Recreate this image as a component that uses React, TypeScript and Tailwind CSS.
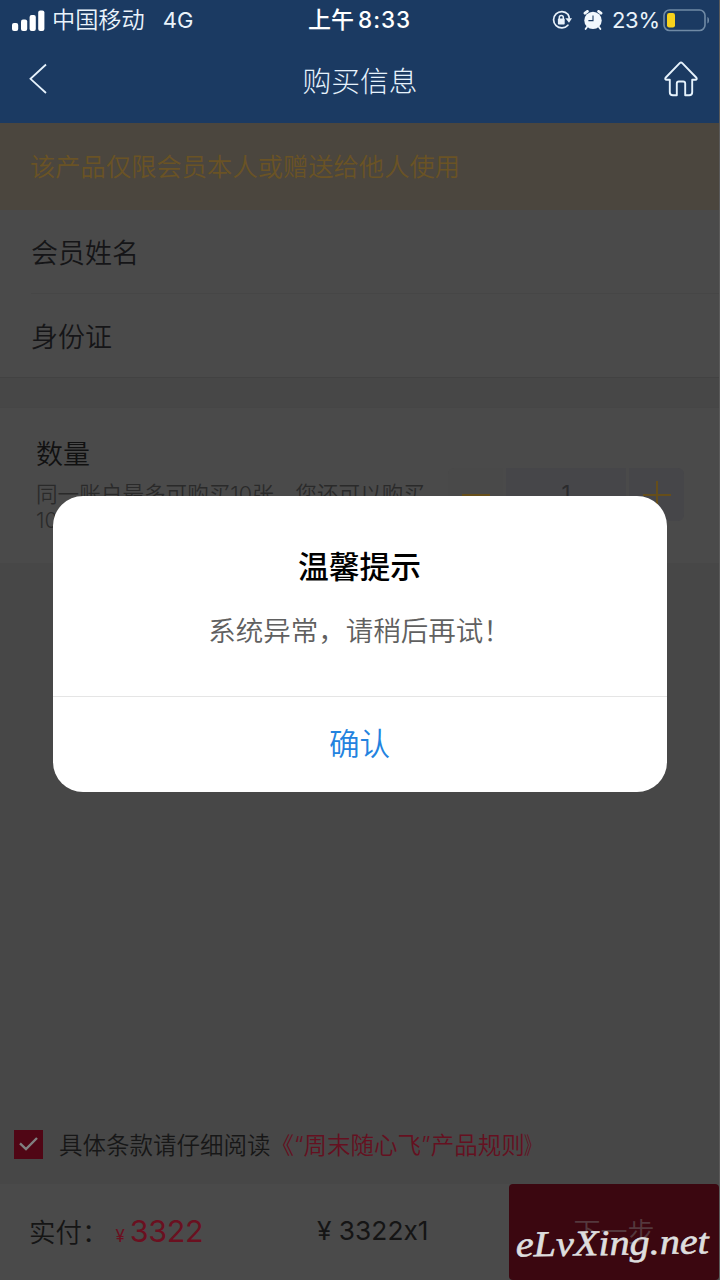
import type { ReactNode } from "react";

const FONT = "font-['Inter','Noto_Sans_CJK_SC',sans-serif] font-[350] [font-feature-settings:'calt'_0]";

function SignalIcon() {
  return (
    <svg width="33" height="21" viewBox="0 0 33 21" fill="#fff">
      <rect x="0" y="13" width="6.2" height="8" rx="2" />
      <rect x="9" y="9.5" width="6.2" height="11.5" rx="2" />
      <rect x="17.6" y="5" width="6.2" height="16" rx="2" />
      <rect x="26.2" y="0.5" width="6.2" height="20.5" rx="2" />
    </svg>
  );
}

function RotationLockIcon() {
  return (
    <svg width="20" height="20" viewBox="0 0 20 20" fill="none" stroke="#e8f1fa" strokeWidth="1.7">
      <path d="M15.9 4.3A8.2 8.2 0 1 0 15.9 15.2" strokeLinecap="round" />
      <path d="M13.4 8.2h6.6l-3 4.5z" fill="#e8f1fa" stroke="none" />
      <path d="M15.9 4.3a8 8 0 0 1 1.4 4.5" />
      <rect x="5.9" y="8.6" width="6.8" height="6" rx="0.8" fill="#e8f1fa" stroke="none" />
      <path d="M7.3 9V7.4a2 2 0 0 1 4 0V9" strokeWidth="1.5" />
    </svg>
  );
}

function AlarmIcon() {
  return (
    <svg width="20" height="20" viewBox="0 0 20 20" fill="none">
      <circle cx="10" cy="10.4" r="8.7" fill="#f2f8fd" />
      <path d="M2 3.2 4.4 1.4M18 3.2 15.6 1.4" stroke="#f2f8fd" strokeWidth="2.8" strokeLinecap="round" />
      <path d="M4 17 2.6 19M16 17l1.4 2" stroke="#f2f8fd" strokeWidth="1.8" strokeLinecap="round" />
      <path d="M10 5.4v5.2H5.4" stroke="#1b3a62" strokeWidth="1.1" />
    </svg>
  );
}

function BatteryIcon() {
  return (
    <svg width="47" height="23" viewBox="0 0 47 23" fill="none">
      <rect x="1" y="1" width="41" height="20.5" rx="5.5" stroke="#708aa5" strokeWidth="1.6" />
      <rect x="4" y="4" width="8" height="14.5" rx="2.2" fill="#f8d21c" />
      <path d="M44.4 8v6.6c1.3-.6 1.6-1.8 1.6-3.3s-.3-2.7-1.6-3.3z" fill="#708aa5" />
    </svg>
  );
}

function StatusBar() {
  return (
    <div className="flex h-10 items-center text-[22px] text-[#eaf3fb]">
      <div className="flex w-[308px] items-center pl-3">
        <SignalIcon />
        <span className="ml-[7px] text-[23.2px] leading-10">中国移动</span>
        <span className="ml-[18px] font-normal leading-10">4G</span>
      </div>
      <div className="flex w-[244px] items-center font-medium text-white">
        <span className="text-[23px] leading-10">上午</span>
        <span className="ml-1 text-[22.5px] leading-10 tracking-[1px]">8:33</span>
      </div>
      <RotationLockIcon />
      <div className="ml-[11px]">
        <AlarmIcon />
      </div>
      <span className="ml-[9px] w-[51px] whitespace-nowrap font-normal leading-10 tracking-[-0.3px]">23%</span>
      <BatteryIcon />
    </div>
  );
}

function NavBar() {
  return (
    <div className="flex h-[83px] items-start justify-between pl-[29px] pr-[21px] text-[#e6f2fc]">
      <svg className="mt-[23px]" width="18" height="32" viewBox="0 0 18 32" fill="none" stroke="currentColor" strokeWidth="1.8">
        <path d="M17 1.5 1.5 15.8 17 30" />
      </svg>
      <h1 className="ml-[9px] text-[28.8px] font-light leading-[84px]">购买信息</h1>
      <svg className="mt-[21px]" width="34" height="36" viewBox="0 0 34 36" fill="none" stroke="currentColor" strokeWidth="1.9" strokeLinejoin="round">
        <path d="M15.7 2.2 1.8 16.5c-1 1.1-.5 2.3.8 2.3h3.2v12.4c0 2 1 3 3 3h4V22.5c0-1.3.7-2 2-2h4.4c1.3 0 2 .7 2 2v11.7h4c2 0 3-1 3-3V18.8h3.2c1.3 0 1.8-1.2.8-2.3L18.3 2.2c-.8-.8-1.8-.8-2.6 0z" />
      </svg>
    </div>
  );
}

function FormRow({ children }: { children: ReactNode }) {
  return <div className="h-[83px] text-[27px] leading-[87px] text-[#151517]">{children}</div>;
}

function QuantitySection() {
  return (
    <section className="flex h-[156px] border-t border-[#464646] bg-[#4a4a4a] pl-9 pr-[34px]">
      <div className="w-[412px] pt-[27px]">
        <div className="text-[27px] leading-10 text-[#111]">数量</div>
        <div className="w-[400px] pt-[6px] text-[21.6px] leading-[26px] text-[#2a2a2a]">
          同一账户最多可购买10张，您还可以购买
          <br />
          10张
        </div>
      </div>
      <div className="mt-[60px] flex h-[53px] gap-[3px]">
        <div className="flex w-[55px] justify-center rounded-l-md bg-[#494949] pt-[26px]">
          <span className="h-[2px] w-7 bg-[#664e1a]" />
        </div>
        <div className="w-[120px] bg-[#464649] text-center text-[22px] font-normal leading-[51px] text-[#2b2b2d]">1</div>
        <div className="flex w-[55px] items-center justify-center rounded-r-md bg-[#464649]">
          <svg width="28" height="28" viewBox="0 0 28 28" stroke="#664e1a" strokeWidth="2">
            <path d="M14 0v28M0 14h28" />
          </svg>
        </div>
      </div>
    </section>
  );
}

function Agreement() {
  return (
    <div className="mt-auto flex h-[80px] items-center pl-[14px] text-[23.5px] leading-10">
      <span className="flex size-[29px] items-center justify-center bg-[#500615]">
        <svg width="19" height="14" viewBox="0 0 19 14" fill="none" stroke="#808080" strokeWidth="2.4">
          <path d="m1 6.3 6 5.7L18 1" />
        </svg>
      </span>
      <span className="ml-4 pt-[3px] text-[#171717]">具体条款请仔细阅读</span>
      <span className="pt-[3px] text-[#651020]">
        《“周末随心飞”产品规则<span className="-ml-px inline-block w-[18px] origin-left scale-x-[0.68]">》</span>
      </span>
    </div>
  );
}

function Watermark() {
  return (
    <svg className="absolute left-0 top-0" width="210" height="96" viewBox="0 0 210 96">
      <text
        x="7"
        y="71"
        textLength="193"
        lengthAdjust="spacingAndGlyphs"
        strokeWidth="0.6"
        transform="rotate(-1 100 71)"
        className="fill-[#dedede] stroke-[#dedede] font-['Brush_Script_MT','Liberation_Serif',cursive] text-[36px] font-normal italic"
      >
        eLvXing.net
      </text>
    </svg>
  );
}

function Footer() {
  return (
    <footer className="flex h-24 bg-[#4a4a4a] pl-[29px] text-[#151515]">
      <div className="flex w-[288px] items-baseline leading-[94px]">
        <span className="text-[26.5px]">实付：</span>
        <span className="ml-[7px] text-[17px] font-normal text-[#6a1020]">¥</span>
        <span className="ml-[5px] text-[30.4px] font-normal tracking-[-0.3px] text-[#6a1020]">3322</span>
      </div>
      <div className="w-[192px] whitespace-nowrap text-[26.3px] font-normal leading-[93px]">¥ 3322x1</div>
      <div className="relative flex-1 rounded-[4px] bg-[#3b0710] text-center text-[27px] leading-[97px] text-[#54383d]">
        下一步
        <Watermark />
      </div>
    </footer>
  );
}

function AlertDialog() {
  return (
    <div className="absolute inset-0 flex items-start justify-center pt-[496px]">
      <div role="alertdialog" className="h-[296px] w-[614px] rounded-[30px] bg-white text-center">
        <div className="h-[200px] pt-[51px]">
          <h2 className="text-[30.8px] font-medium leading-10 text-black">温馨提示</h2>
          <p className="pt-[24px] text-[27.5px] leading-10 text-[#606060]">系统异常，请稍后再试！</p>
        </div>
        <button className="flex h-24 w-full justify-center border-t border-[#e5e5e5] text-[30.6px] leading-[94px] text-[#2383df]">
          确认
        </button>
      </div>
    </div>
  );
}

export default function App() {
  return (
    <div className={`relative flex h-[1280px] w-[720px] flex-col overflow-hidden border-r border-[#5a5a5a] bg-[#474747] ${FONT}`}>
      <header className="bg-[#1b3a62]">
        <StatusBar />
        <NavBar />
      </header>
      <div className="h-[87px] bg-[#4b463e] pl-[30px] text-[25.3px] leading-[88px] text-[#6a5325]">
        该产品仅限会员本人或赠送给他人使用
      </div>
      <section className="mb-[29px] border-b border-[#424242] bg-[#4a4a4a] pl-[31px]">
        <FormRow>会员姓名</FormRow>
        <div className="border-t border-[#464646]" />
        <FormRow>身份证</FormRow>
      </section>
      <QuantitySection />
      <Agreement />
      <Footer />
      <AlertDialog />
    </div>
  );
}
